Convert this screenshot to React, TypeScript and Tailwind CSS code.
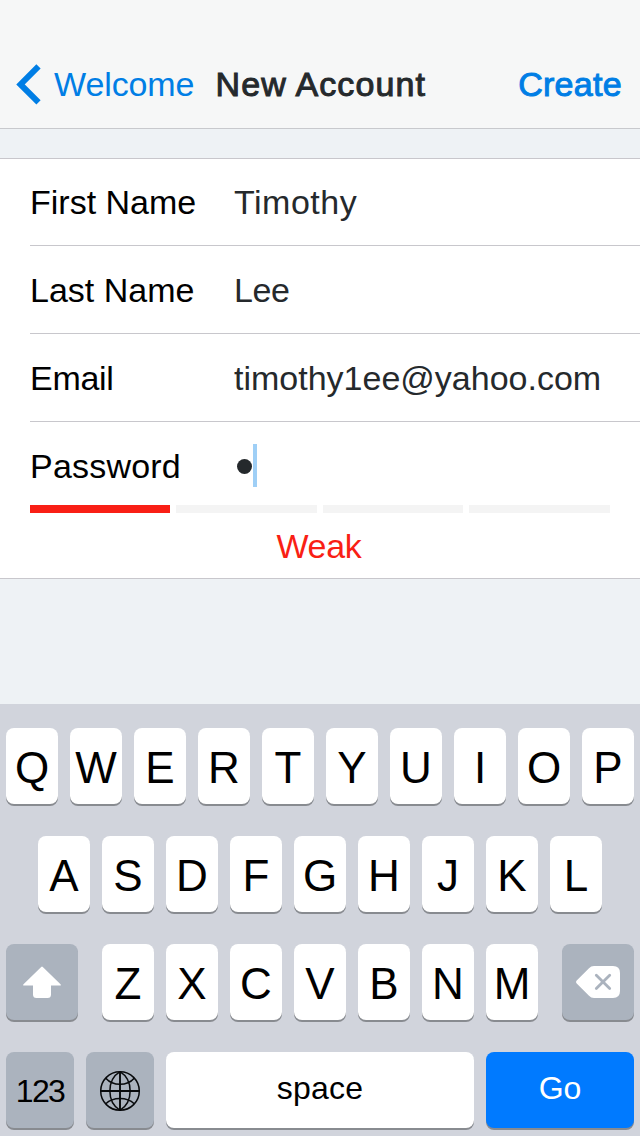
import type { ReactNode } from "react";

type KeyProps = { className?: string; children: ReactNode; label?: string };

function Key({ className = "w-[52px] bg-white text-[44px]", children, label }: KeyProps) {
  return (
    <button
      type="button"
      aria-label={label}
      className={`flex h-[76px] shrink-0 items-center justify-center rounded-[8px] leading-none shadow-[0_2px_0_#888b90] ${className}`}
    >
      {children}
    </button>
  );
}

function Letters({ text }: { text: string }) {
  return (
    <div className="flex gap-3">
      {text.split("").map((c) => (
        <Key key={c}>
          <span className="pt-[3px]">{c}</span>
        </Key>
      ))}
    </div>
  );
}

function Field({ label, children, className }: { label: ReactNode; children: ReactNode; className: string }) {
  return (
    <div className={`ml-[30px] flex items-center ${className}`}>
      <div className="w-[204px] shrink-0">{label}</div>
      <div className="flex items-center text-[#25292c]">{children}</div>
    </div>
  );
}

function ShiftIcon() {
  return (
    <svg width="38" height="32" viewBox="0 0 38 32" fill="white">
      <path d="M18.2 1Q19 .2 19.8 1L37.5 18.2Q38.6 19.6 36.8 19.6H28V28.5Q28 32 24.5 32H13.5Q10 32 10 28.5V19.6H1.2Q-.6 19.6 .5 18.2Z" />
    </svg>
  );
}

function GlobeIcon() {
  return (
    <svg width="42" height="42" viewBox="0 0 42 42" fill="none" stroke="#080a0c" strokeWidth="1.5" className="mt-[2px]">
      <circle cx="21" cy="21" r="19.3" />
      <path d="M21 1.5V40.5M1.5 21H40.5" strokeWidth="1.9" />
      <path d="M21 1.7C7.5 10 7.5 32 21 40.3M21 1.7C34.5 10 34.5 32 21 40.3" />
      <path d="M6.8 8.2C14 16.3 28 16.3 35.2 8.2M6.8 33.8C14 26.7 28 26.7 35.2 33.8" />
    </svg>
  );
}

function DeleteIcon() {
  return (
    <svg width="44" height="32" viewBox="0 0 44 32" fill="none">
      <path d="M.7 14.5L13 2.2Q15 0 18 0H37Q44 0 44 7V25Q44 32 37 32H18Q15 32 13 29.8L.7 17.5Q-.6 16 .7 14.5Z" fill="white" />
      <path d="M20.3 9.2L33.7 22.6M33.7 9.2L20.3 22.6" stroke="#abb3be" strokeWidth="2.8" strokeLinecap="round" />
    </svg>
  );
}

export default function App() {
  return (
    <div className="flex h-[1136px] w-[640px] flex-col overflow-hidden bg-[#eef2f5] font-['Liberation_Sans',Arial,sans-serif] text-[34px] leading-[40px] text-black">
      <header className="flex h-[129px] shrink-0 items-end border-b border-[#c8c9cd] bg-[#f6f7f7] pb-6">
        <button type="button" className="flex w-[215px] items-center pl-4 text-[#007ee5]">
          <svg width="26" height="42" viewBox="0 0 26 42" fill="none" stroke="currentColor" strokeWidth="6" className="-my-1 shrink-0">
            <path d="M22.5 3.3L4.5 21.5L22.5 39.3" />
          </svg>
          <span className="ml-3 tracking-[-0.1px]">Welcome</span>
        </button>
        <h1 className="ml-[0.5px] whitespace-nowrap tracking-[1.1px] [-webkit-text-stroke:1px_#25292c] text-[#25292c]">New Account</h1>
        <button type="button" className="mr-[18px] ml-auto tracking-[0.3px] [-webkit-text-stroke:1px_#007ee5] text-[#007ee5]">
          Create
        </button>
      </header>

      <main className="mt-[29px] h-[421px] shrink-0 border-y border-[#c8c7cc] bg-white">
        <Field label="First Name" className="h-[87px] border-b border-[#c8c7cc]">
          <span className="tracking-[0.5px]">Timothy</span>
        </Field>
        <Field label="Last Name" className="h-[88px] border-b border-[#c8c7cc]">
          <span className="tracking-[-0.4px]">Lee</span>
        </Field>
        <Field label={<span className="tracking-[-0.3px]">Email</span>} className="h-[88px] border-b border-[#c8c7cc]">
          timothy1ee@yahoo.com
        </Field>
        <Field label={<span className="tracking-[0.2px]">Password</span>} className="h-[83px] pt-[4px]">
          <span className="mt-[2px] ml-[3px] size-[15px] rounded-full bg-[#25292c]" />
          <span className="ml-[1px] h-[43px] w-1 bg-[#9fcff6]" />
        </Field>
        <div className="mx-[30px] grid h-2 grid-cols-[140px_141px_140px_141px] gap-[6px]">
          <span className="bg-[#f91f15]" />
          <span className="bg-[#f4f4f4]" />
          <span className="bg-[#f4f4f4]" />
          <span className="bg-[#f4f4f4]" />
        </div>
        <p className="mt-[13px] pr-[2px] text-center tracking-[-0.3px] text-[#f91f15]">Weak</p>
      </main>

      <section className="mt-auto flex h-[432px] shrink-0 flex-col gap-8 bg-[#d1d4dc] px-[6px] pt-6">
        <Letters text="QWERTYUIOP" />
        <div className="flex justify-center">
          <Letters text="ASDFGHJKL" />
        </div>
        <div className="flex justify-between">
          <Key className="w-[72px] bg-[#abb3be]" label="Shift"><ShiftIcon /></Key>
          <Letters text="ZXCVBNM" />
          <Key className="w-[72px] bg-[#abb3be]" label="Delete"><DeleteIcon /></Key>
        </div>
        <div className="flex gap-3">
          <Key className="w-[68px] bg-[#abb3be] text-[32px] tracking-[-1.7px]">
            <span className="pt-[2px]">123</span>
          </Key>
          <Key className="w-[68px] bg-[#abb3be]" label="Next keyboard"><GlobeIcon /></Key>
          <Key className="w-[308px] bg-white text-[32px] tracking-[0.2px]">
            <span className="pb-[5px]">space</span>
          </Key>
          <Key className="w-[148px] bg-[#007aff] text-[32px] text-white">
            <span className="pb-[5px]">Go</span>
          </Key>
        </div>
      </section>
    </div>
  );
}
